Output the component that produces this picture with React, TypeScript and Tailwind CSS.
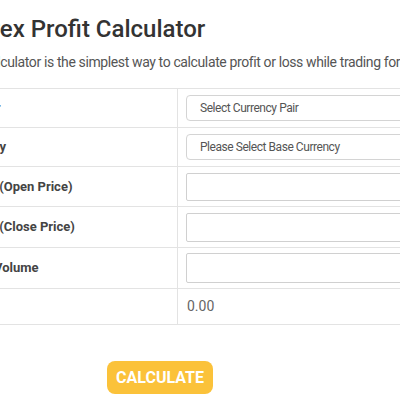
import { useState } from 'react';

const rows = [
  { label: 'Currency Pair', kind: 'select', placeholder: 'Select Currency Pair', h: 'h-[39px]' },
  { label: 'Base Currency', kind: 'select', placeholder: 'Please Select Base Currency', h: 'h-[39px]' },
  { label: 'Market Price (Open Price)', kind: 'input', inputH: 'h-[28px]', h: 'h-[40px]' },
  { label: 'Market Price (Close Price)', kind: 'input', inputH: 'h-[29px]', h: 'h-[41px]' },
  { label: 'Trade Size / Volume', kind: 'input', inputH: 'h-[30px]', h: 'h-[41px]' },
];

export default function App() {
  const [profit] = useState('0.00');

  return (
    <div className="w-[400px] h-[400px] overflow-hidden bg-white font-['Roboto',sans-serif]">
      <div className="ml-[-96px] w-[600px]">
        <div className="pl-[61px] pt-[14px]">
          <h1 className="text-[24px] leading-[30px] font-medium text-[#333]">Forex Profit Calculator</h1>
          <p className="mt-[8px] -ml-[6px] text-[14px] leading-[20px] tracking-[-0.38px] text-[#555]">
            Our calculator is the simplest way to calculate profit or loss while trading forex.
          </p>
        </div>

        <div className="mt-[16px] border-b border-[#e3e3e3]">
          {rows.map((row) => (
            <div key={row.label} className={`flex border-t border-[#e3e3e3] ${row.h}`}>
              <div className="w-[274px] shrink-0 border-r border-[#e3e3e3] pl-[17px] flex items-center">
                <span className="text-[13px] font-bold text-[#444]">{row.label}</span>
              </div>
              <div className="flex-1 pl-[8px] flex items-center">
                {row.kind === 'select' ? (
                  <div className="w-[300px] h-[26px] rounded-[4px] border border-[#d4d4d4] flex items-center pl-[13px] text-[12px] tracking-[-0.45px] text-[#555]">
                    {row.placeholder}
                  </div>
                ) : (
                  <div className={`w-[300px] ${row.inputH} rounded-[2px] border border-[#d0d0d0]`} />
                )}
              </div>
            </div>
          ))}
          <div className="flex border-t border-[#e3e3e3] h-[36px]">
            <div className="w-[274px] shrink-0 border-r border-[#e3e3e3] pl-[17px] flex items-center">
              <span className="text-[13px] font-bold text-[#444]">Profit</span>
            </div>
            <div className="flex-1 pl-[9px] flex items-center text-[14px] text-[#666]">{profit}</div>
          </div>
        </div>

        <button className="mt-[36px] ml-[203px] w-[106px] h-[33px] rounded-[8px] bg-[#fbc23a] text-white text-[16px] font-bold">
          CALCULATE
        </button>
      </div>
    </div>
  );
}
